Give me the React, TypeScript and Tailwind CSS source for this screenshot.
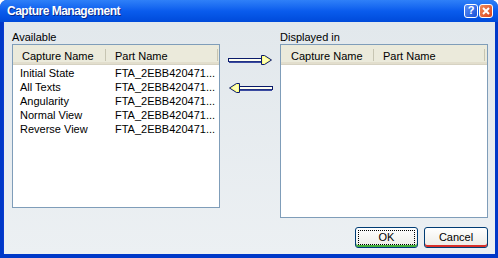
import React from "react";

const font = { fontFamily: '"Liberation Sans", Arial, sans-serif' };

function Header({ sepA, sepB, c1, c2 }: { sepA: number; sepB: number; c1: number; c2: number }) {
  return (
    <div className="relative h-[20px] bg-[#ebeadb] border-b border-[#d6d2c2] shadow-[inset_0_-2px_0_#e2decd]">
      <span className="absolute top-[3px] text-[11px] text-black" style={{ left: c1 }}>Capture Name</span>
      <span className="absolute top-[3px] text-[11px] text-black" style={{ left: c2 }}>Part Name</span>
      <div className="absolute top-[4px] h-[12px] w-[1px] bg-[#c7c5b2]" style={{ left: sepA }} />
      <div className="absolute top-[4px] h-[12px] w-[1px] bg-[#c7c5b2]" style={{ left: sepB }} />
    </div>
  );
}

function Arrow({ dir }: { dir: "right" | "left" }) {
  return (
    <svg width="45" height="11" viewBox="0 0 45 11" style={{ transform: dir === "left" ? "scaleX(-1)" : undefined }}>
      <rect x="0.5" y="3.5" width="34" height="3" fill="#fffff0" stroke="#0a1a6a" />
      <rect x="1" y="6.5" width="34" height="1.5" fill="#3a4aa0" />
      <path d="M33.5 0.5 L36.5 0.5 L43.5 5 L36.5 9.5 L33.5 9.5 Z" fill="#ffff80" stroke="#0a1a6a" />
      <path d="M35 2 L36.3 2 L41 5 L36.3 8 L35 8 Z" fill="#ffffb8" />
    </svg>
  );
}

export default function App() {
  const rows = ["Initial State", "All Texts", "Angularity", "Normal View", "Reverse View"];
  return (
    <div className="w-[498px] h-[258px] flex flex-col bg-[#0038c8] rounded-t-[7px] overflow-hidden" style={font}>
      <div className="h-[22px] flex items-center px-[7px] bg-gradient-to-b from-[#2f80f8] via-[#0a5ced] to-[#004ada]">
        <span className="text-white font-bold text-[12px] tracking-[-0.5px] [text-shadow:1px_1px_0_#0a2a8a] flex-1">Capture Management</span>
        <div className="flex gap-[1px] mr-[-2px] mt-[-1px]">
          <div className="w-[14px] h-[14px] rounded-[3px] border border-white bg-gradient-to-br from-[#5a8ef5] to-[#1a50d8] flex items-center justify-center text-white font-bold text-[11px] leading-none">?</div>
          <div className="w-[14px] h-[14px] rounded-[3px] border border-white bg-gradient-to-br from-[#f08a5a] to-[#d8401a] flex items-center justify-center">
            <svg width="8" height="8" viewBox="0 0 8 8"><path d="M1 1 L7 7 M7 1 L1 7" stroke="white" strokeWidth="2" /></svg>
          </div>
        </div>
      </div>
      <div className="flex-1 mx-[3px] mb-[4px] bg-gradient-to-b from-[#e2e8ec] to-[#ecf0f3] flex flex-col border-l border-[#0a3bd0]">
        <div className="flex pt-[9px] pl-[8px]">
          <div className="w-[208px] flex flex-col">
            <div className="h-[13px] text-[11px] leading-[13px] text-black">Available</div>
            <div className="h-[164px] bg-white border border-[#7f9db9] flex flex-col">
              <Header sepA={92} sepB={204} c1={9} c2={102} />
              <div className="pt-[1px] flex flex-col">
                {rows.map((r) => (
                  <div key={r} className="h-[14px] flex text-[11px] leading-[14px] text-black">
                    <span className="w-[102px] pl-[7px]">{r}</span>
                    <span>FTA_2EBB420471...</span>
                  </div>
                ))}
              </div>
            </div>
          </div>
          <div className="w-[60px] flex flex-col items-center pt-[24px] gap-[17px] pl-[1px]">
            <Arrow dir="right" />
            <Arrow dir="left" />
          </div>
          <div className="w-[208px] flex flex-col">
            <div className="h-[13px] text-[11px] leading-[13px] text-black">Displayed in</div>
            <div className="h-[174px] bg-white border border-[#7f9db9] flex flex-col">
              <Header sepA={92} sepB={203} c1={10} c2={102} />
            </div>
          </div>
        </div>
        <div className="flex justify-end gap-[6px] pr-[7px] mt-[9px]">
          <div className="w-[63px] h-[21px] rounded-[3px] border border-[#003c74] bg-gradient-to-b from-[#ffffff] to-[#ecebe6] p-[2px] shadow-[inset_0_-2px_0_#44b03a]">
            <div className="h-full border border-dotted border-black flex items-center justify-center text-[11px] text-black">OK</div>
          </div>
          <div className="w-[64px] h-[21px] rounded-[3px] border border-[#003c74] bg-gradient-to-b from-[#ffffff] to-[#ecebe6] flex items-center justify-center text-[11px] text-black shadow-[inset_0_-2px_0_#d8302a]">Cancel</div>
        </div>
      </div>
    </div>
  );
}
